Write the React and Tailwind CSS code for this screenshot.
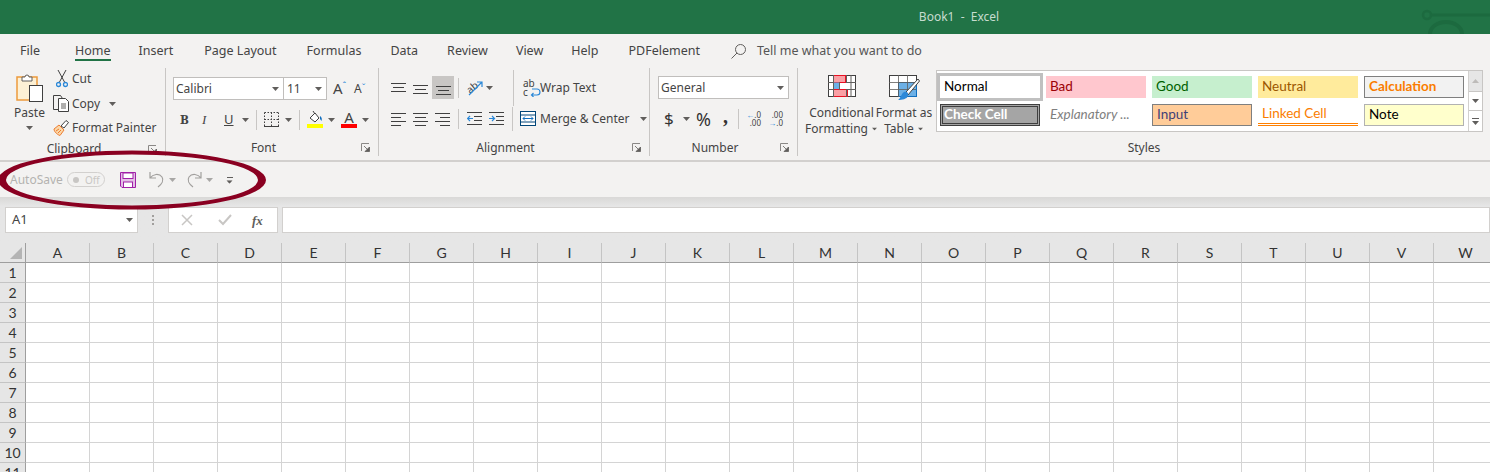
import React from "react";

const Caret = ({ className = "" }) => (
  <svg width="7" height="4" viewBox="0 0 7 4" className={`shrink-0 ${className}`}>
    <path d="M0 0h7L3.5 4z" fill="#605e5c" />
  </svg>
);

const Launcher = () => (
  <svg width="9" height="9" viewBox="0 0 9 9" className="shrink-0">
    <path d="M.5 8V.5H8" fill="none" stroke="#8a8886" />
    <path d="M3 3l4.5 4.5M8.500 4v4.500H4z" fill="#605e5c" stroke="#605e5c" strokeWidth=".8" />
  </svg>
);

const VSep = ({ className = "" }) => <div className={`w-px bg-[#c8c6c4] shrink-0 ${className}`} />;

const Group = ({ label, width, launcher = true, children }) => (
  <div className={`flex flex-col h-[88px] border-r border-[#c8c6c4] shrink-0 ${width}`}>
    <div className="h-[74px]">{children}</div>
    <div className="flex items-center h-[20px] pt-[2px]">
      <span className="flex-1 text-center text-[12px] leading-none text-[#444]">{label}</span>
      <div className="w-[17px] flex">{launcher && <Launcher />}</div>
    </div>
  </div>
);

// ---- ribbon icons

const PasteIcon = () => (
  <svg width="28" height="31" viewBox="0 0 28 31">
    <rect x="1" y="5" width="20" height="23" fill="#fdf1d5" stroke="#ed9a3c" strokeWidth="1.500" />
    <path d="M6 9V5h3a2 2 0 0 1 4 0h3v4z" fill="#fff" stroke="#605e5c" />
    <rect x="13.500" y="13.500" width="13" height="16" fill="#fff" stroke="#404040" />
  </svg>
);

const CutIcon = () => (
  <svg width="12" height="18" viewBox="0 0 12 18">
    <path d="M2 0l6.500 12M10 0L3.500 12" fill="none" stroke="#404040" />
    <circle cx="2.500" cy="14.500" r="2" fill="none" stroke="#2b88d8" strokeWidth="1.300" />
    <circle cx="9.500" cy="14.500" r="2" fill="none" stroke="#2b88d8" strokeWidth="1.300" />
  </svg>
);

const CopyIcon = () => (
  <svg width="17" height="17" viewBox="0 0 17 17">
    <path d="M5.500 14.500h-5V.5h7l2 3" fill="none" stroke="#404040" />
    <path d="M5.500 3.500h7l3 3v10h-10z" fill="#fff" stroke="#404040" />
    <path d="M8 9h5M8 11h5M8 13h5" stroke="#605e5c" />
  </svg>
);

const PainterIcon = () => (
  <svg width="16" height="16" viewBox="0 0 16 16">
    <path d="M1 9l5-4 5 5-4 5.500C5 15 1 12 1 9z" fill="#fbd7a8" stroke="#ed7d31" />
    <path d="M3 11l3-2M5 13l3-3" stroke="#ed7d31" />
    <path d="M8 6l5-5.500 2.500 2L11 8z" fill="#fff" stroke="#404040" />
  </svg>
);

const BordersIcon = () => (
  <svg width="15" height="15" viewBox="0 0 15 15" fill="none" stroke="#404040">
    <path d="M.5.500h14M.5 7.500h14M.5.500v14M7.500.500v14M14.500.500v14" strokeDasharray="1.500 1.500" />
    <path d="M0 14.500h15" />
  </svg>
);

const FillIcon = () => (
  <svg width="16" height="17" viewBox="0 0 16 17">
    <path d="M3 7l5-5 4 5-4 4z" fill="#fff" stroke="#404040" />
    <path d="M6 0l2 3" stroke="#404040" />
    <path d="M13 5c2 1 2 3 1.500 5l-1.500-2z" fill="#106ebe" />
    <rect x="0" y="13" width="16" height="4" fill="#ffff00" />
  </svg>
);

const AlignLines = ({ lines }) => (
  <svg width="15" height="15" viewBox="0 0 15 15" stroke="#404040" className="shrink-0">
    {lines.map(([x1, x2, y]) => (
      <path key={y} d={`M${x1} ${y}.5H${x2}`} />
    ))}
  </svg>
);

const OrientIcon = () => (
  <svg width="18" height="18" viewBox="0 0 18 18">
    <text x="0" y="12" fontSize="10" fontFamily="Noto Sans" fill="#404040" transform="rotate(-40 6 8)">ab</text>
    <path d="M3 16L16 3M11 3h5v5" fill="none" stroke="#2b88d8" strokeWidth="1.200" />
  </svg>
);

const WrapIcon = () => (
  <div className="relative w-[16px] h-[18px] text-[10px] leading-[9px] text-[#404040] font-['Noto_Sans']">
    <div>ab</div>
    <div>c</div>
    <svg width="12" height="10" viewBox="0 0 12 10" className="absolute left-[6px] top-[8px]">
      <path d="M3 8h5a3 3 0 0 0 0-6H3M4.500 6L2.500 8l2 2" fill="none" stroke="#2b88d8" strokeWidth="1.200" />
    </svg>
  </div>
);

const MergeIcon = () => (
  <svg width="16" height="15" viewBox="0 0 16 15" className="shrink-0">
    <rect x=".5" y=".5" width="15" height="14" fill="#fff" stroke="#004578" />
    <path d="M.5 4h15M.5 11h15" stroke="#004578" />
    <path d="M3 7.500h10M5 5.500l-2 2 2 2M11 5.500l2 2-2 2" fill="none" stroke="#106ebe" />
  </svg>
);

const IndentIcon = ({ flip }) => (
  <svg width="15" height="15" viewBox="0 0 15 15" className="shrink-0">
    <path d="M0 1.500h15M7 5.500h8M7 9.500h8M0 13.500h15" stroke="#404040" />
    {flip ? (
      <path d="M0 7.500h5M3 5l2.500 2.500L3 10" fill="none" stroke="#2b88d8" strokeWidth="1.200" />
    ) : (
      <path d="M6 7.500H1M3 5L.5 7.500 3 10" fill="none" stroke="#2b88d8" strokeWidth="1.200" />
    )}
  </svg>
);

const CondIcon = () => (
  <svg width="28" height="23" viewBox="0 0 28 23">
    <rect x=".5" y=".5" width="27" height="21" fill="#fff" stroke="#404040" />
    <rect x="5.500" y=".5" width="12" height="7" fill="#f9a0a5" stroke="#e81123" />
    <rect x="5.500" y="7.500" width="6" height="7" fill="#6cb0e6" />
    <rect x="5.500" y="14.500" width="14" height="7" fill="#f9a0a5" stroke="#e81123" />
    <path d="M0 7.500h5M18 7.500h10M0 14.500h5M18 14.500h10M5.500 0v22M11.500 7v8M18.500 0v7M18.500 14v8M23 0v22" stroke="#605e5c" />
  </svg>
);

const TableIcon = () => (
  <svg width="31" height="28" viewBox="0 0 31 28">
    <rect x=".5" y=".5" width="27" height="21" fill="#fff" stroke="#404040" />
    <rect x="9.500" y="7.500" width="18" height="14" fill="#6cb0e6" stroke="#106ebe" />
    <path d="M0 7.500h27M0 14.500h27M9.500 0v22M18.500 0v22" stroke="#605e5c" strokeWidth=".8" />
    <path d="M29 4L17 17l2 3L30.500 6z" fill="#fff" stroke="#404040" />
    <path d="M15 17c3-1 5 1 4 4-1 3-6 4-10 4 3-2 3-6 6-8z" fill="#2b88d8" />
  </svg>
);

// ---- style gallery

const StyleCell = ({ label, className = "" }) => (
  <div className={`w-[100px] h-[22px] flex items-center pl-[4px] font-['Lato'] text-[13.500px] leading-none overflow-hidden shrink-0 ${className}`}>
    {label}
  </div>
);

const Gallery = () => (
  <div className="flex h-[62px] w-[547px] border border-[#c8c6c4] bg-white mt-[2px]">
    <div className="w-[532px] flex flex-col pl-[3px] pt-[5px] gap-[6px]">
      <div className="flex gap-[6px]">
        <StyleCell label="Normal" className="text-black bg-white outline-[3px] outline-[#c0c0c0] -outline-offset-[0px]" />
        <StyleCell label="Bad" className="bg-[#ffc7ce] text-[#9c0006]" />
        <StyleCell label="Good" className="bg-[#c6efce] text-[#006100]" />
        <StyleCell label="Neutral" className="bg-[#ffeb9c] text-[#9c5700]" />
        <StyleCell label="Calculation" className="bg-[#f2f2f2] text-[#fa7d00] font-bold border border-[#7f7f7f]" />
      </div>
      <div className="flex gap-[6px]">
        <StyleCell label="Check Cell" className="bg-[#a5a5a5] text-white font-bold border-[3px] border-double border-[#3f3f3f] !pl-[1px]" />
        <StyleCell label="Explanatory ..." className="text-[#7f7f7f] italic" />
        <StyleCell label="Input" className="bg-[#ffcc99] text-[#3f3f76] border border-[#7f7f7f]" />
        <StyleCell label="Linked Cell" className="text-[#fa7d00] border-b-[3px] border-double border-[#ff8001]" />
        <StyleCell label="Note" className="bg-[#ffffcc] text-black border border-[#b2b2b2]" />
      </div>
    </div>
    <div className="w-[14px] flex flex-col border-l border-[#d2d0ce] bg-white">
      <div className="h-[21px] bg-[#e6e6e6] border-b border-[#c8c6c4] flex items-center justify-center">
        <svg width="7" height="4" viewBox="0 0 7 4"><path d="M0 4h7L3.500 0z" fill="#bdbbb9" /></svg>
      </div>
      <div className="h-[19px] border-b border-[#c8c6c4] flex items-center justify-center"><Caret /></div>
      <div className="flex-1 flex flex-col items-center justify-center gap-[2px]">
        <div className="w-[7px] h-px bg-[#605e5c]" />
        <Caret />
      </div>
    </div>
  </div>
);

// ---- ribbon groups

const Clipboard = () => (
  <div className="flex">
    <div className="w-[53px] pl-[6px] flex flex-col items-center pt-[4px]">
      <PasteIcon />
      <span className="mt-[2px] text-[12px] leading-[16px] text-[#444]">Paste</span>
      <Caret className="mt-[5px]" />
    </div>
    <div className="flex flex-col text-[12px] text-[#444] -mt-px">
      <div className="h-[24px] flex items-center"><div className="w-[19px] pl-[3px]"><CutIcon /></div>Cut</div>
      <div className="h-[25px] flex items-center"><div className="w-[19px]"><CopyIcon /></div>Copy<Caret className="ml-[9px]" /></div>
      <div className="h-[24px] flex items-center"><div className="w-[19px]"><PainterIcon /></div>Format Painter</div>
    </div>
  </div>
);

const FontGroup = () => (
  <div className="flex flex-col pl-[7px] pt-[9px]">
    <div className="flex items-center h-[23px]">
      <div className="w-[111px] h-[23px] bg-white border border-[#c0bebc] flex items-center justify-between pl-[2px] pr-[4px] text-[12px] text-[#444]">Calibri<Caret /></div>
      <div className="w-[43px] h-[23px] bg-white border border-[#c0bebc] border-l-0 flex items-center justify-between pl-[3px] pr-[4px] text-[12px] text-[#444]">11<Caret /></div>
      <div className="ml-[6px] w-[21px] text-[15px] leading-none text-[#444] flex">A<span className="text-[9px] text-[#2b88d8]">ˆ</span></div>
      <div className="w-[16px] text-[12px] leading-none text-[#444] flex">A<span className="text-[9px] text-[#2b88d8]">ˇ</span></div>
    </div>
    <div className="flex items-center h-[23px] mt-[8px] text-[#444]">
      <span className="ml-[7px] w-[22px] text-[13px] font-bold font-['Noto_Serif','Liberation_Serif',serif]">B</span>
      <span className="w-[22px] text-[13px] italic font-['Liberation_Serif',serif]">I</span>
      <span className="w-[17px] text-[13px] underline">U</span>
      <Caret className="ml-[1px]" />
      <VSep className="h-[20px] ml-[7px] mr-[7px]" />
      <BordersIcon />
      <Caret className="ml-[6px]" />
      <VSep className="h-[20px] ml-[7px] mr-[7px]" />
      <FillIcon />
      <Caret className="ml-[5px]" />
      <div className="ml-[6px] w-[16px] flex flex-col items-center">
        <span className="text-[15px] leading-[13px]">A</span>
        <div className="w-[16px] h-[4px] bg-[#ff0000]" />
      </div>
      <Caret className="ml-[5px]" />
    </div>
  </div>
);

const Alignment = () => (
  <div className="flex flex-col pl-[12px] pt-[8px]">
    <div className="flex items-center h-[23px]">
      <AlignLines lines={[[0, 15, 3], [2, 13, 7], [0, 15, 11]]} />
      <div className="ml-[7px]"><AlignLines lines={[[0, 15, 5], [2, 13, 9], [0, 15, 13]]} /></div>
      <div className="ml-[4px] w-[22px] h-[23px] bg-[#c8c6c4] flex items-center justify-center"><AlignLines lines={[[0, 15, 6], [2, 13, 10], [0, 15, 14]]} /></div>
      <VSep className="h-[20px] ml-[4px] mr-[7px]" />
      <OrientIcon />
      <Caret className="ml-[2px]" />
      <VSep className="h-[36px] ml-[20px] mr-[9px]" />
      <WrapIcon />
      <span className="ml-[1px] text-[12px] text-[#444]">Wrap Text</span>
    </div>
    <div className="flex items-center h-[23px] mt-[8px]">
      <AlignLines lines={[[0, 15, 2], [0, 10, 6], [0, 15, 10], [0, 10, 14]]} />
      <div className="ml-[7px]"><AlignLines lines={[[0, 15, 2], [2, 13, 6], [0, 15, 10], [2, 13, 14]]} /></div>
      <div className="ml-[7px]"><AlignLines lines={[[0, 15, 2], [5, 15, 6], [0, 15, 10], [5, 15, 14]]} /></div>
      <VSep className="h-[20px] ml-[8px] mr-[8px]" />
      <IndentIcon />
      <div className="ml-[7px]"><IndentIcon flip /></div>
      <VSep className="h-[24px] ml-[8px] mr-[7px]" />
      <MergeIcon />
      <span className="ml-[4px] text-[12px] text-[#444]">Merge &amp; Center</span>
      <Caret className="ml-[10px]" />
    </div>
  </div>
);

const NumberGroup = () => (
  <div className="flex flex-col pl-[8px] pt-[8px]">
    <div className="w-[131px] h-[23px] bg-white border border-[#c0bebc] flex items-center justify-between pl-[2px] pr-[4px] text-[12px] text-[#444]">General<Caret /></div>
    <div className="flex items-center h-[23px] mt-[8px] text-[#333]">
      <span className="ml-[6px] w-[18px] text-[17px] leading-none">$</span>
      <Caret className="ml-[1px]" />
      <span className="ml-[6px] w-[22px] text-[18px] leading-none">%</span>
      <span className="w-[15px] text-[20px] leading-none font-bold text-center font-['Liberation_Serif',serif] -mt-[5px]">,</span>
      <VSep className="h-[20px] ml-[5px] mr-[6px]" />
      <div className="w-[16px] text-[8px] leading-[8px] text-right text-[#444] relative">
        <div className="text-[#2b88d8]">←<span className="text-[#444]">.0</span></div>
        <div>.00</div>
      </div>
      <div className="ml-[6px] w-[16px] text-[8px] leading-[8px] text-right text-[#444]">
        <div>.00</div>
        <div className="text-[#2b88d8]">→<span className="text-[#444]">.0</span></div>
      </div>
    </div>
  </div>
);

const BigButton = ({ icon, top, bottom, width }) => (
  <div className={`flex flex-col items-center text-[12px] leading-[16px] text-[#444] ${width}`}>
    <div className="h-[35px] pt-[7px]">{icon}</div>
    <div className="mt-[2px]">{top}</div>
    <div className="flex items-center gap-[3px]">{bottom}<Caret className="scale-75" /></div>
  </div>
);

const Styles = () => (
  <div className="flex pl-[10px]">
    <BigButton icon={<CondIcon />} top="Conditional" bottom="Formatting" width="w-[67px]" />
    <BigButton icon={<TableIcon />} top="Format as" bottom="Table" width="w-[58px]" />
    <div className="ml-[3px]"><Gallery /></div>
  </div>
);

const tabs = [
  ["File", "ml-[20px]"],
  ["Home", "ml-[35px]"],
  ["Insert", "ml-[28px]"],
  ["Page Layout", "ml-[31px]"],
  ["Formulas", "ml-[30px]"],
  ["Data", "ml-[29px]"],
  ["Review", "ml-[29px]"],
  ["View", "ml-[28px]"],
  ["Help", "ml-[28px]"],
  ["PDFelement", "ml-[30px]"],
];

// ---- quick access toolbar

const QuickAccess = () => (
  <div className="h-[35px] bg-[#f3f2f1] flex items-center pl-[10px] relative">
    <span className="w-[57px] text-[12px] text-[#b4b2b0]">AutoSave</span>
    <div className="w-[38px] h-[15px] rounded-full border border-[#d2d0ce] flex items-center pl-[5px] gap-[6px]">
      <div className="w-[6px] h-[6px] rounded-full bg-[#c8c6c4]" />
      <span className="text-[10px] leading-none text-[#c8c6c4]">Off</span>
    </div>
    <svg width="16" height="16" viewBox="0 0 16 16" className="ml-[15px]">
      <path d="M.5.500h15v15H2l-1.500-1.500z" fill="#e3bfe6" stroke="#a020a8" />
      <rect x="3" y="1" width="10" height="5.500" fill="#fff" stroke="#a020a8" />
      <rect x="3.500" y="10" width="9" height="5.500" fill="#fff" stroke="#a020a8" />
    </svg>
    <svg width="16" height="17" viewBox="0 0 16 17" fill="none" stroke="#a19f9d" strokeWidth="1.200" className="ml-[13px]">
      <path d="M1 1v6h6M1 7c3-4 9-5 12-1 2 3 0 7-4 10" />
    </svg>
    <Caret className="ml-[4px] opacity-50" />
    <svg width="16" height="17" viewBox="0 0 16 17" fill="none" stroke="#a19f9d" strokeWidth="1.200" className="ml-[10px]">
      <path d="M15 1v6H9M15 7c-3-4-9-5-12-1-2 3 0 7 4 10" />
    </svg>
    <Caret className="ml-[4px] opacity-50" />
    <div className="ml-[13px] mt-[2px] flex flex-col items-center gap-[2px]">
      <div className="w-[6px] h-px bg-[#605e5c]" />
      <Caret className="scale-90" />
    </div>
  </div>
);

const FormulaBar = () => (
  <div className="h-[46px] bg-[#e6e6e6] flex pt-[10px] bg-gradient-to-b from-[#d9d8d7] via-[#e6e6e6] via-[20%] to-[#e6e6e6]">
    <div className="ml-[5px] w-[133px] h-[26px] bg-white border border-[#d2d0ce] flex items-center justify-between pl-[6px] pr-[4px] text-[13px] text-[#444]">
      A1<Caret />
    </div>
    <div className="w-[30px] flex flex-col items-center justify-center gap-[2px] h-[26px]">
      <div className="w-[2px] h-[2px] bg-[#a19f9d]" />
      <div className="w-[2px] h-[2px] bg-[#a19f9d]" />
      <div className="w-[2px] h-[2px] bg-[#a19f9d]" />
    </div>
    <div className="w-[110px] h-[26px] bg-white border border-[#d2d0ce] flex items-center pl-[12px]">
      <svg width="12" height="12" viewBox="0 0 12 12" stroke="#c8c6c4" strokeWidth="1.500"><path d="M1 1l10 10M11 1L1 11" /></svg>
      <svg width="14" height="12" viewBox="0 0 14 12" fill="none" stroke="#c8c6c4" strokeWidth="2" className="ml-[25px]"><path d="M1 6l4 4 8-9" /></svg>
      <span className="ml-[20px] text-[13px] italic font-bold leading-none text-[#605e5c] font-['Liberation_Serif',serif]">fx</span>
    </div>
    <div className="ml-[4px] flex-1 h-[26px] bg-white border border-[#d2d0ce]" />
  </div>
);

const columns = "ABCDEFGHIJKLMNOPQRSTUVW".split("");
const rows = [1, 2, 3, 4, 5, 6, 7, 8, 9, 10, 11];

const Sheet = () => (
  <div className="font-['Lato'] text-[14px] text-[#333]">
    <div className="flex h-[20px] bg-[#e6e6e6]">
      <div className="w-[26px] shrink-0 border-r border-b border-[#9e9e9e] flex items-end justify-end pr-[3px] pb-[3px]">
        <svg width="12" height="12" viewBox="0 0 12 12"><path d="M12 0v12H0z" fill="#b4b4b4" /></svg>
      </div>
      {columns.map((c) => (
        <div key={c} className="w-[64px] shrink-0 border-r border-b border-[#c4c4c4] border-b-[#9e9e9e] flex items-center justify-center">{c}</div>
      ))}
    </div>
    {rows.map((r) => (
      <div key={r} className="flex h-[20px] bg-white">
        <div className="w-[26px] shrink-0 bg-[#e6e6e6] border-r border-b border-[#c4c4c4] border-r-[#9e9e9e] flex items-center justify-center">{r}</div>
        {columns.map((c) => (
          <div key={c} className="w-[64px] shrink-0 border-r border-b border-[#d4d4d4]" />
        ))}
      </div>
    ))}
  </div>
);

const App = () => {
  return (
    <div className="relative w-[1490px] h-[472px] overflow-hidden bg-white font-['Noto_Sans',sans-serif]">
      <div className="relative h-[34px] bg-[#217346] flex items-center justify-center overflow-hidden">
        <span className="ml-[428px] text-[12px] text-[#c7dccf]">Book1&nbsp; -&nbsp; Excel</span>
        <svg width="70" height="34" viewBox="0 0 70 34" fill="none" stroke="#1c6a3f" className="absolute right-0 top-0">
          <circle cx="7" cy="15" r="4" strokeWidth="2.500" />
          <path d="M11 15h59" strokeWidth="3" />
          <path d="M10 34a16 12 0 0 1 32 0" strokeWidth="4" />
        </svg>
      </div>

      <div className="h-[34px] bg-[#f3f2f1] flex items-center text-[12.500px] text-[#444]">
        {tabs.map(([name, ml]) => (
          <div key={name} className={`relative h-[34px] flex items-center ${ml}`}>
            {name}
            {name === "Home" && <div className="absolute left-0 right-0 bottom-[7px] h-[2px] bg-[#217346]" />}
          </div>
        ))}
        <svg width="15" height="15" viewBox="0 0 15 15" fill="none" stroke="#605e5c" className="ml-[31px]">
          <circle cx="9.500" cy="5.500" r="5" />
          <path d="M6 9l-5.500 5.500" />
        </svg>
        <span className="ml-[11px] text-[#555]">Tell me what you want to do</span>
      </div>

      <div className="h-[94px] bg-[#f3f2f1] flex border-b-2 border-[#d2d0ce]">
        <Group label="Clipboard" width="w-[166px]"><Clipboard /></Group>
        <Group label="Font" width="w-[213px]"><FontGroup /></Group>
        <Group label="Alignment" width="w-[271px]"><Alignment /></Group>
        <Group label="Number" width="w-[148px]"><NumberGroup /></Group>
        <div className="flex flex-col flex-1 h-[88px]">
          <div className="h-[74px]"><Styles /></div>
          <div className="h-[20px] pt-[2px] flex items-center justify-center text-[12px] leading-none text-[#444] pr-[-1px]">Styles</div>
        </div>
      </div>

      <QuickAccess />
      <FormulaBar />
      <Sheet />

      <svg width="270" height="64" viewBox="0 0 270 64" className="absolute left-0 top-[148px]">
        <path
          fillRule="evenodd"
          d="M-2 32a134 29.500 0 1 0 268 0a134 29.500 0 1 0-268 0zM6 32a126 25.500 0 1 0 252 0a126 25.500 0 1 0-252 0z"
          fill="#8a0021"
        />
      </svg>
    </div>
  );
};

export default App;
